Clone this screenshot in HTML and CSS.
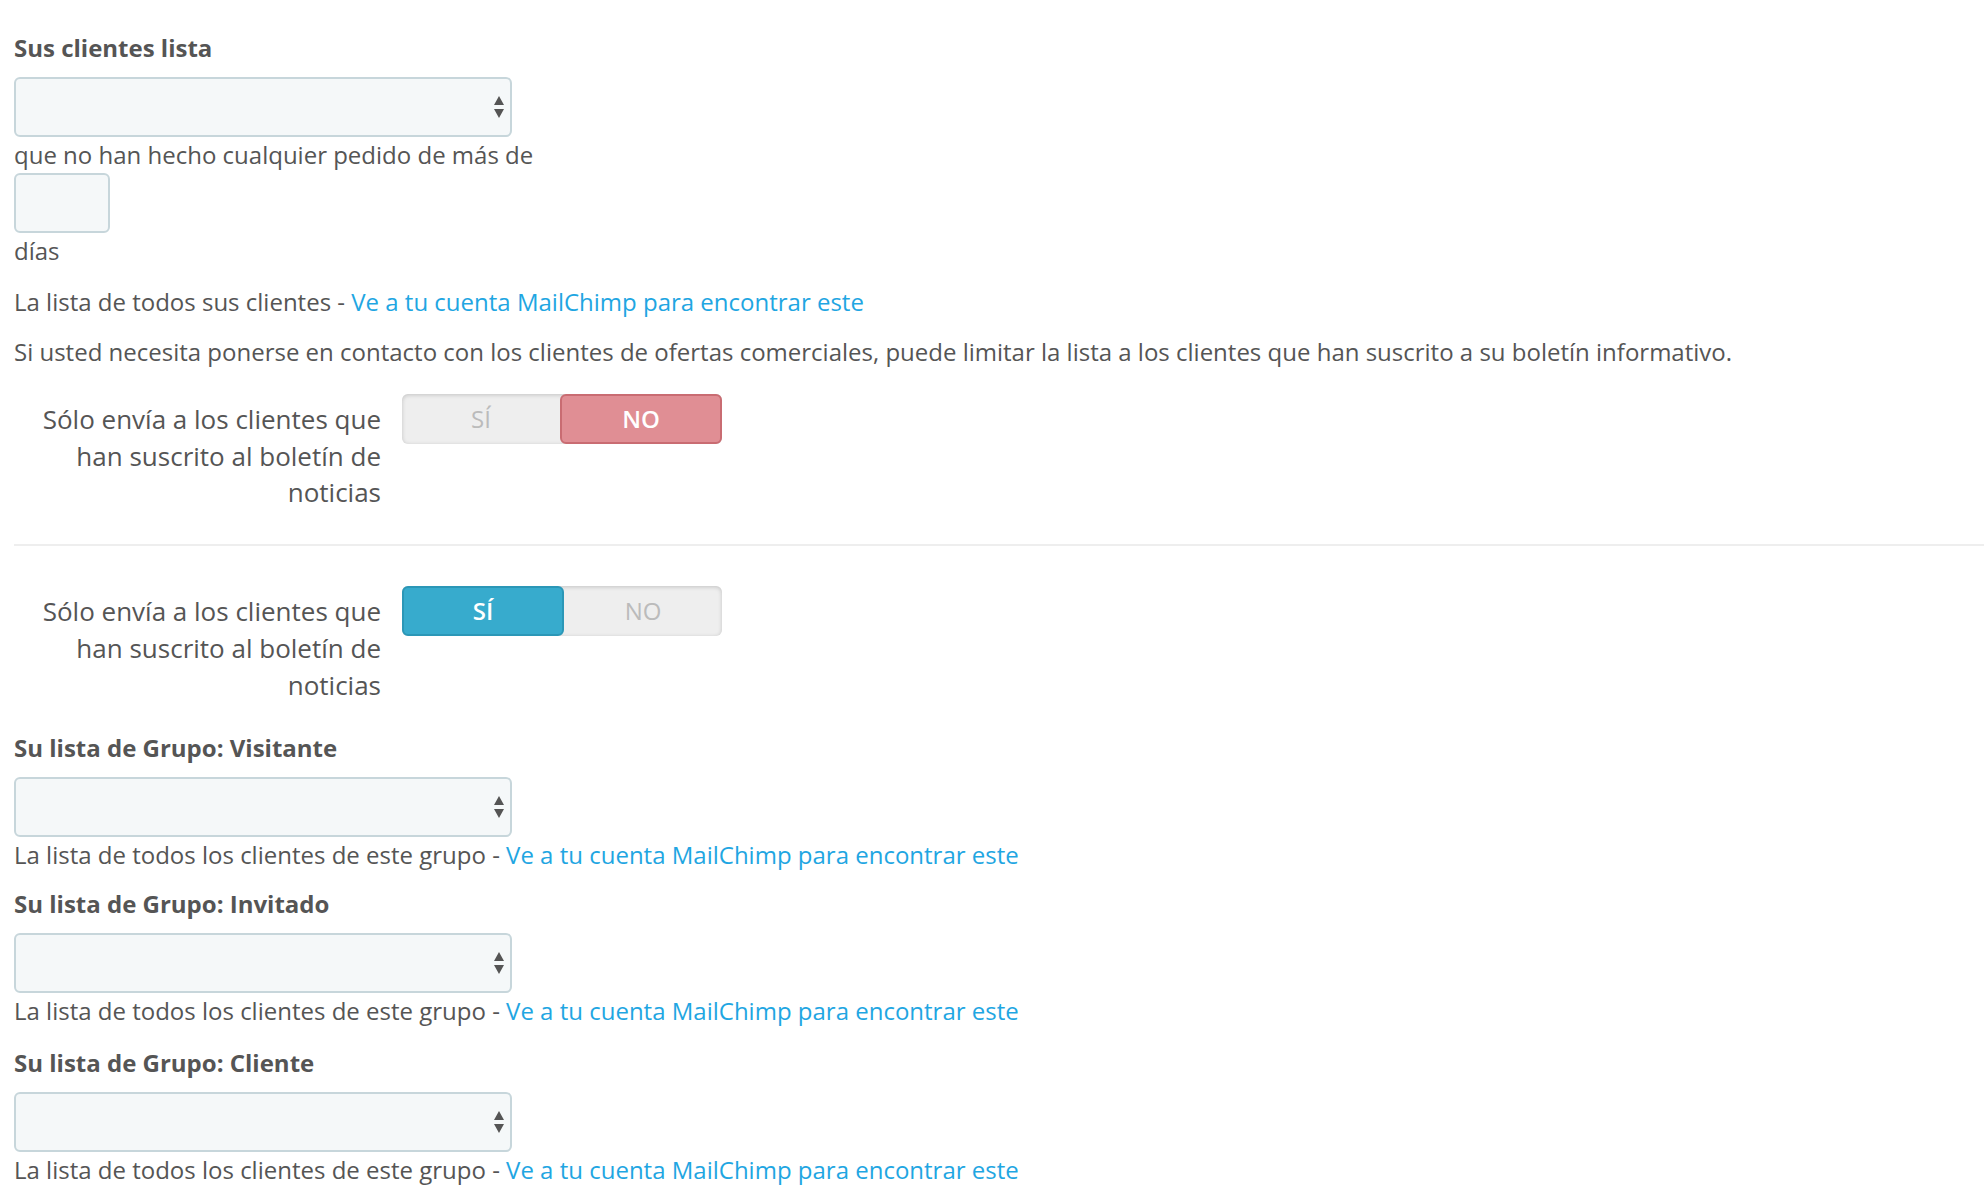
FILE: index.html
```html
<!DOCTYPE html>
<html lang="es">
<head>
<meta charset="utf-8">
<title>MailChimp</title>
<link rel="stylesheet" href="styles.css">
</head>
<body>
<div class="page">
  <section class="block">
    <h3 class="title">Sus clientes lista</h3>
    <div class="select-wrap">
      <select class="select"><option></option></select>
      <svg class="arrows" width="10" height="22" viewBox="0 0 10 22"><path d="M5 0 L10 9 L0 9 Z M0 13 L10 13 L5 22 Z" fill="#555"/></svg>
    </div>
    <div class="line">que no han hecho cualquier pedido de más de</div>
    <input class="days" type="text">
    <div class="line">días</div>
    <p class="help">La lista de todos sus clientes - <a href="#">Ve a tu cuenta MailChimp para encontrar este</a></p>
    <p class="note">Si usted necesita ponerse en contacto con los clientes de ofertas comerciales, puede limitar la lista a los clientes que han suscrito a su boletín informativo.</p>
    <div class="switch-row">
      <div class="switch-label">Sólo envía a los clientes que han suscrito al boletín de noticias</div>
      <div class="switch">
        <span class="opt">SÍ</span>
        <span class="opt on-no">NO</span>
      </div>
    </div>
  </section>
  <hr class="divider">
  <section class="block">
    <div class="switch-row second">
      <div class="switch-label">Sólo envía a los clientes que han suscrito al boletín de noticias</div>
      <div class="switch">
        <span class="opt on-yes">SÍ</span>
        <span class="opt">NO</span>
      </div>
    </div>
    <div class="group first">
      <h3 class="title">Su lista de Grupo: Visitante</h3>
      <div class="select-wrap">
        <select class="select"><option></option></select>
        <svg class="arrows" width="10" height="22" viewBox="0 0 10 22"><path d="M5 0 L10 9 L0 9 Z M0 13 L10 13 L5 22 Z" fill="#555"/></svg>
      </div>
      <div class="line">La lista de todos los clientes de este grupo - <a href="#">Ve a tu cuenta MailChimp para encontrar este</a></div>
    </div>
    <div class="group">
      <h3 class="title">Su lista de Grupo: Invitado</h3>
      <div class="select-wrap">
        <select class="select"><option></option></select>
        <svg class="arrows" width="10" height="22" viewBox="0 0 10 22"><path d="M5 0 L10 9 L0 9 Z M0 13 L10 13 L5 22 Z" fill="#555"/></svg>
      </div>
      <div class="line">La lista de todos los clientes de este grupo - <a href="#">Ve a tu cuenta MailChimp para encontrar este</a></div>
    </div>
    <div class="group last">
      <h3 class="title">Su lista de Grupo: Cliente</h3>
      <div class="select-wrap">
        <select class="select"><option></option></select>
        <svg class="arrows" width="10" height="22" viewBox="0 0 10 22"><path d="M5 0 L10 9 L0 9 Z M0 13 L10 13 L5 22 Z" fill="#555"/></svg>
      </div>
      <div class="line">La lista de todos los clientes de este grupo - <a href="#">Ve a tu cuenta MailChimp para encontrar este</a></div>
    </div>
  </section>
</div>
</body>
</html>
```
FILE: styles.css
```css
* { box-sizing: border-box; }
html, body { margin: 0; padding: 0; background: #fff; }
body {
  font-family: "Open Sans", "Noto Sans", sans-serif;
  font-size: 24px;
  line-height: 36px;
  color: #555;
}
.page { padding: 30px 0 0 14px; }
.title {
  margin: 0 0 11px 0;
  font-size: 24px;
  line-height: 36px;
  font-weight: 700;
  color: #555;
}
.select-wrap {
  position: relative;
  width: 498px;
  height: 60px;
}
.select {
  appearance: none;
  -webkit-appearance: none;
  display: block;
  width: 100%;
  height: 100%;
  margin: 0;
  background: #f5f8f9;
  border: 2px solid #c7d6db;
  border-radius: 6px;
  font: inherit;
  color: #555;
}
.arrows {
  position: absolute;
  right: 8px;
  top: 19px;
  pointer-events: none;
}
.line { margin: 0; }
.days {
  display: block;
  width: 96px;
  height: 60px;
  margin: 0;
  background: #f5f8f9;
  border: 2px solid #c7d6db;
  border-radius: 6px;
}
.help { margin: 15px 0 0 0; }
.note { margin: 14px 0 0 0; }
a { color: #1fa6e2; text-decoration: none; }
.switch-row {
  display: flex;
  align-items: flex-start;
  gap: 21px;
  margin-top: 24px;
}
.switch-row.second { margin-top: 0; }
.switch-label {
  width: 367px;
  padding: 7px 0 0 20px;
  text-align: right;
  font-size: 26px;
  line-height: 36.7px;
}
.switch {
  display: flex;
  width: 320px;
  height: 50px;
  background: #eee;
  border-radius: 6px;
  box-shadow: inset 0 1px 4px rgba(0,0,0,0.18);
}
.opt {
  flex: 1;
  display: flex;
  align-items: center;
  justify-content: center;
  color: #bbb;
  font-size: 24px;
  border-radius: 6px;
}
.on-no {
  background: #e08e94;
  border: 2px solid #c96c72;
  color: #fff;
  font-weight: 600;
}
.on-yes {
  background: #37abcd;
  border: 2px solid #2b97b7;
  color: #fff;
  font-weight: 600;
}
.divider {
  margin: 33px 0 40px 0;
  border: 0;
  height: 2px;
  background: #eee;
}
.group { margin-top: 13px; }
.group.first { margin-top: 27px; }
.group.last { margin-top: 16px; }
```
